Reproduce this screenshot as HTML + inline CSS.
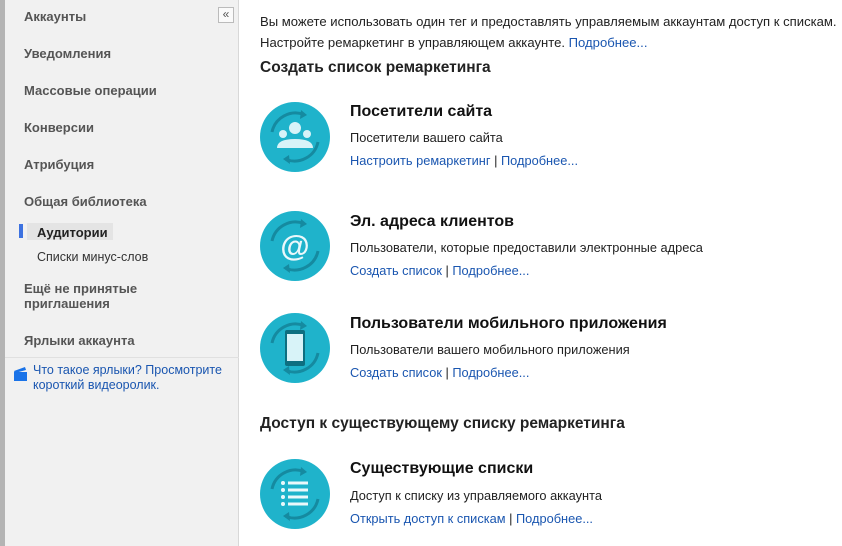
<!DOCTYPE html>
<html><head><meta charset="utf-8"><style>
*{margin:0;padding:0;box-sizing:border-box}
body{width:842px;height:546px;overflow:hidden;background:#fff;font-family:"Liberation Sans","DejaVu Sans",sans-serif;position:relative}
.lb{position:absolute;left:0;top:0;width:5px;height:546px;background:#b4b4b4}
.side{position:absolute;left:5px;top:0;width:234px;height:546px;background:#f1f1f1;border-right:1px solid #d8d8d8}
.n{position:absolute;left:19px;font-size:13px;font-weight:bold;color:#555}
.sub{position:absolute;left:32px;font-size:13px;color:#333}
.a{color:#1a56b0;text-decoration:none}
.t{position:absolute;font-size:12.8px;color:#222}
.h{position:absolute;left:260px;font-size:15.5px;font-weight:bold;color:#222}
.ti{position:absolute;left:350px;font-size:16px;font-weight:bold;color:#111}
.ic{position:absolute;left:260px;width:70px;height:70px}
</style></head><body>
<div class="lb"></div>
<div class="side">
<div style="position:absolute;left:213px;top:7px;width:16px;height:16px;border:1px solid #bbb;background:#fafafa;font-size:12px;line-height:13px;text-align:center;color:#555">«</div>
<div class="n" style="top:9px">Аккаунты</div>
<div class="n" style="top:46px">Уведомления</div>
<div class="n" style="top:83px">Массовые операции</div>
<div class="n" style="top:120px">Конверсии</div>
<div class="n" style="top:157px">Атрибуция</div>
<div class="n" style="top:194px">Общая библиотека</div>
<div style="position:absolute;left:14px;top:224px;width:4px;height:14px;background:#3d72e0"></div>
<div style="position:absolute;left:22px;top:223px;width:86px;height:17px;background:#e4e4e4"></div>
<div class="sub" style="top:225px;font-weight:bold;color:#222">Аудитории</div>
<div class="sub" style="top:250px;font-size:12.5px">Списки минус-слов</div>
<div class="n" style="top:281px;line-height:15px">Ещё не принятые<br>приглашения</div>
<div class="n" style="top:333px">Ярлыки аккаунта</div>
<div style="position:absolute;left:0;top:357px;width:234px;border-top:1px solid #e0e0e0"></div>
<svg style="position:absolute;left:8px;top:366px" width="16" height="16" viewBox="0 0 16 16"><rect x="1" y="6" width="13" height="9" fill="#1a73e8"/><path d="M1 5 L12 1 L13 4 L2 7Z" fill="#1a73e8"/></svg>
<div style="position:absolute;left:28px;top:363px;font-size:12.5px;line-height:15px" class="a">Что такое ярлыки? Просмотрите<br>короткий видеоролик.</div>
</div>
<div class="t" style="left:260px;top:11px;line-height:21px;font-size:13.1px">Вы можете использовать один тег и предоставлять управляемым аккаунтам доступ к спискам.<br>Настройте ремаркетинг в управляющем аккаунте. <span class="a">Подробнее...</span></div>
<div class="h" style="top:59px">Создать список ремаркетинга</div>
<div class="h" style="top:415px">Доступ к существующему списку ремаркетинга</div>

<svg width="0" height="0" style="position:absolute"><defs><g id="arr"><path d="M12 30 A24 24 0 0 1 44 12.5" stroke="#158aa0" stroke-width="3" fill="none"/><path d="M41 8 L47 13 L40 17Z" fill="#158aa0"/><path d="M58 40 A24 24 0 0 1 26 57.5" stroke="#158aa0" stroke-width="3" fill="none"/><path d="M29 53 L23 57 L30 62Z" fill="#158aa0"/></g></defs></svg>

<svg class="ic" style="top:102px" viewBox="0 0 70 70"><circle cx="35" cy="35" r="35" fill="#1fb3cb"/><use href="#arr"/><circle cx="35" cy="26" r="6" fill="#d8f3f8"/><circle cx="23" cy="32" r="4" fill="#d8f3f8"/><circle cx="47" cy="32" r="4" fill="#d8f3f8"/><path d="M17 46 Q17 37 35 37 Q53 37 53 46Z" fill="#d8f3f8"/></svg>
<div class="ti" style="top:103px">Посетители сайта</div>
<div class="t" style="left:350px;top:130px">Посетители вашего сайта</div>
<div class="t" style="left:350px;top:153px"><span class="a">Настроить ремаркетинг</span> | <span class="a">Подробнее...</span></div>

<svg class="ic" style="top:211px" viewBox="0 0 70 70"><circle cx="35" cy="35" r="35" fill="#1fb3cb"/><use href="#arr"/><text x="35" y="45" font-size="30" text-anchor="middle" fill="#eaf8fb" font-family="Liberation Sans" font-weight="bold">@</text></svg>
<div class="ti" style="top:213px">Эл. адреса клиентов</div>
<div class="t" style="left:350px;top:240px">Пользователи, которые предоставили электронные адреса</div>
<div class="t" style="left:350px;top:263px"><span class="a">Создать список</span> | <span class="a">Подробнее...</span></div>

<svg class="ic" style="top:313px" viewBox="0 0 70 70"><circle cx="35" cy="35" r="35" fill="#1fb3cb"/><use href="#arr"/><rect x="25" y="17" width="20" height="36" rx="2" fill="#0e6f80"/><rect x="27" y="21" width="16" height="27" fill="#d8f3f8"/></svg>
<div class="ti" style="top:315px">Пользователи мобильного приложения</div>
<div class="t" style="left:350px;top:342px">Пользователи вашего мобильного приложения</div>
<div class="t" style="left:350px;top:365px"><span class="a">Создать список</span> | <span class="a">Подробнее...</span></div>

<svg class="ic" style="top:459px" viewBox="0 0 70 70"><circle cx="35" cy="35" r="35" fill="#1fb3cb"/><use href="#arr"/><g fill="#eaf8fb"><circle cx="23" cy="24" r="2"/><circle cx="23" cy="31" r="2"/><circle cx="23" cy="38" r="2"/><circle cx="23" cy="45" r="2"/><rect x="28" y="22.5" width="20" height="3"/><rect x="28" y="29.5" width="20" height="3"/><rect x="28" y="36.5" width="20" height="3"/><rect x="28" y="43.5" width="20" height="3"/></g></svg>
<div class="ti" style="top:460px">Существующие списки</div>
<div class="t" style="left:350px;top:488px">Доступ к списку из управляемого аккаунта</div>
<div class="t" style="left:350px;top:511px"><span class="a">Открыть доступ к спискам</span> | <span class="a">Подробнее...</span></div>
</body></html>
